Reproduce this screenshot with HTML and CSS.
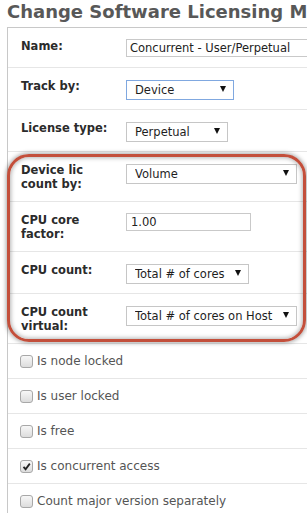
FILE: index.html
```html
<!DOCTYPE html>
<html lang="en">
<head>
    <meta charset="UTF-8">
    <meta name="viewport" content="width=device-width, initial-scale=1.0">
    <title>Change Software Licensing Model</title>
    <link rel="stylesheet" href="styles.css">
</head>
<body>
    <h1>Change Software Licensing Model</h1>

    <div class="panel">
        <div class="row">
            <label class="label" for="name">Name:</label>
            <div class="value"><input type="text" id="name" class="text name-input" value="Concurrent - User/Perpetual"></div>
        </div>
        <div class="row">
            <label class="label" for="trackBy">Track by:</label>
            <div class="value"><span class="dropdown focus w-track"><select id="trackBy"><option>Device</option></select></span></div>
        </div>
        <div class="row">
            <label class="label" for="licType">License type:</label>
            <div class="value"><span class="dropdown w-type"><select id="licType"><option>Perpetual</option></select></span></div>
        </div>
        <div class="row">
            <label class="label" for="countBy">Device lic count by:</label>
            <div class="value"><span class="dropdown w-wide"><select id="countBy"><option>Volume</option></select></span></div>
        </div>
        <div class="row">
            <label class="label" for="coreFactor">CPU core factor:</label>
            <div class="value"><input type="text" id="coreFactor" class="text factor-input" value="1.00"></div>
        </div>
        <div class="row">
            <label class="label" for="cpuCount">CPU count:</label>
            <div class="value"><span class="dropdown w-count"><select id="cpuCount"><option>Total # of cores</option></select></span></div>
        </div>
        <div class="row">
            <label class="label" for="cpuVirtual">CPU count virtual:</label>
            <div class="value"><span class="dropdown w-wide"><select id="cpuVirtual"><option>Total # of cores on Host</option></select></span></div>
        </div>

        <div class="row check-row"><span class="box"></span><span>Is node locked</span></div>
        <div class="row check-row"><span class="box"></span><span>Is user locked</span></div>
        <div class="row check-row"><span class="box"></span><span>Is free</span></div>
        <div class="row check-row">
            <span class="box"><svg width="11" height="11" viewBox="0 0 11 11"><path d="M2.5 5.8 L4.6 8.2 L8.8 2.6" fill="none" stroke="#222" stroke-width="1.8"/></svg></span>
            <span>Is concurrent access</span>
        </div>
        <div class="row check-row"><span class="box"></span><span>Count major version separately</span></div>
    </div>

    <!-- highlight round the CPU settings -->
    <div class="highlight"></div>
</body>
</html>
```

FILE: styles.css
```css
html, body {
    overflow: hidden;
}
body {
    margin: 0;
    position: relative;
    font-family: "DejaVu Sans", Verdana, sans-serif;
    color: #2b2b2b;
}
h1 {
    margin: 1px 0 4px 7px;
    font-size: 18px;
    line-height: 22px;
    font-weight: bold;
    color: #585858;
    white-space: nowrap;
}
.panel {
    margin-left: 7px;
    width: 340px;
    border-left: 1px solid #c8c8c8;
    border-top: 1px solid #c8c8c8;
}
.row {
    display: flex;
    align-items: flex-start;
    padding: 11px 0 10px 13px;
    border-bottom: 1px solid #e6e6e6;
}
.label {
    width: 88px;
    margin-right: 17px;
    flex: none;
    font-size: 11.5px;
    line-height: 14px;
    font-weight: bold;
    color: #2b2b2b;
}
.value {
    flex: 1;
}
.text {
    display: block;
    height: 18px;
    box-sizing: border-box;
    border: 1px solid #c9c9c9;
    padding: 0 3px;
    font-family: "DejaVu Sans", Verdana, sans-serif;
    font-size: 11.5px;
    color: #222;
}
.name-input {
    width: 210px;
}
.factor-input {
    width: 125px;
    padding-left: 4px;
}
.dropdown {
    display: block;
    position: relative;
    height: 20px;
}
.dropdown select {
    appearance: none;
    -webkit-appearance: none;
    width: 100%;
    height: 20px;
    box-sizing: border-box;
    border: 1px solid #c6c6c6;
    border-radius: 0;
    background: #fff;
    padding: 0 0 0 8px;
    font-family: "DejaVu Sans", Verdana, sans-serif;
    font-size: 11.5px;
    color: #1e1e1e;
    outline: none;
}
.dropdown::after {
    content: "";
    position: absolute;
    right: 8px;
    top: 7px;
    border-left: 3px solid transparent;
    border-right: 3px solid transparent;
    border-top: 6px solid #111;
}
.dropdown.focus select {
    border-color: #80a8e0;
}
.w-track { width: 108px; }
.w-type { width: 102px; }
.w-count { width: 123px; }
.w-wide { width: 171px; }
.check-row {
    align-items: center;
    gap: 4px;
    padding-left: 12px;
    font-size: 12px;
    line-height: 13px;
    color: #555;
}
.box {
    width: 13px;
    height: 13px;
    box-sizing: border-box;
    border: 1px solid #a8a8a8;
    border-radius: 3px;
    background: linear-gradient(#f7f7f7, #dcdcdc);
    display: flex;
    align-items: center;
    justify-content: center;
}
.box svg {
    display: block;
}
.highlight {
    position: absolute;
    left: 7px;
    top: 154px;
    width: 299px;
    height: 188px;
    box-sizing: border-box;
    border: 3px solid #c34f3b;
    border-radius: 22px;
    box-shadow: 0 0 4px 1px rgba(0, 0, 0, 0.35), inset 0 0 4px 1px rgba(0, 0, 0, 0.3);
    pointer-events: none;
}
```
